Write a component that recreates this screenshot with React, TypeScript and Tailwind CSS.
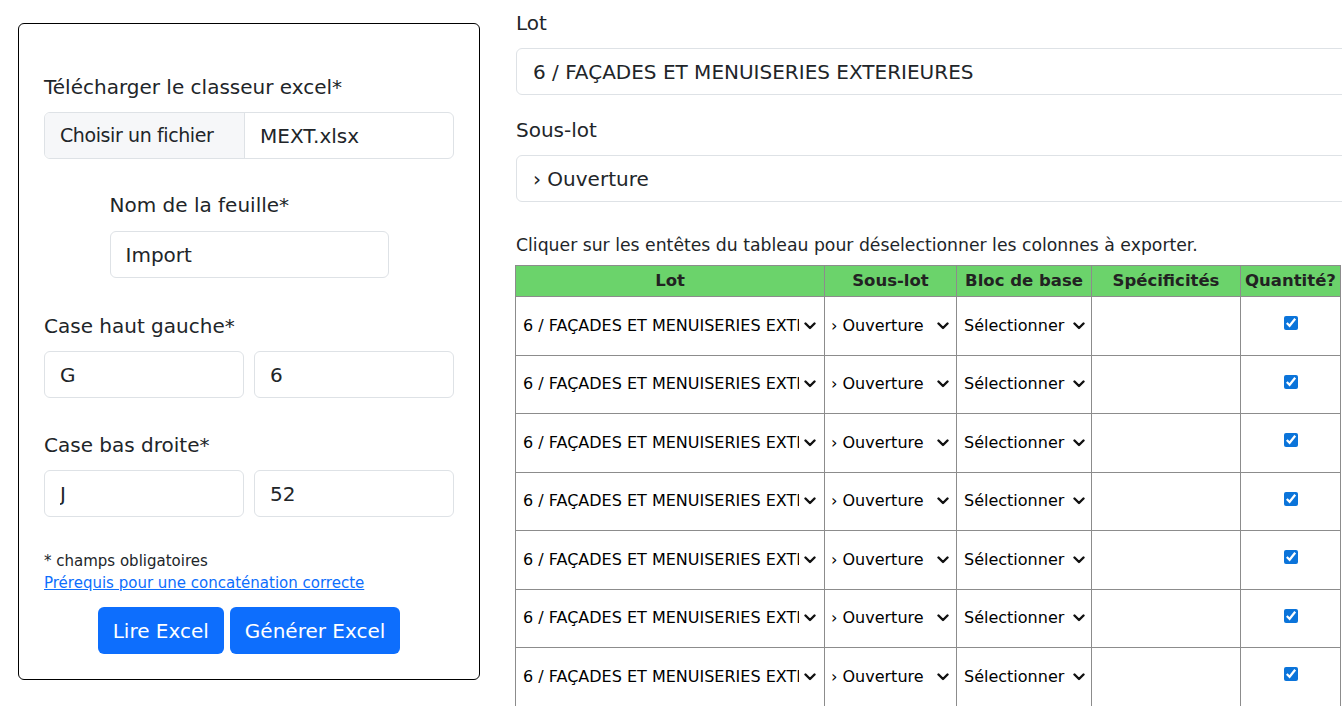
import React from 'react';

const rows = Array.from({ length: 7 }, (_, i) => i);

function Chevron() {
  return (
    <svg width="12" height="8" viewBox="0 0 12 8" className="pointer-events-none absolute right-[1px] top-1/2 -translate-y-1/2">
      <path d="M1.5 1.5 L6 6 L10.5 1.5" fill="none" stroke="#111" strokeWidth="2.4" strokeLinecap="round" strokeLinejoin="round" />
    </svg>
  );
}

function CellSelect({ value }: { value: string }) {
  return (
    <div className="relative w-full">
      <select
        defaultValue={value}
        className="w-full appearance-none bg-transparent pr-[18px] text-[16px] text-black outline-none"
      >
        <option>{value}</option>
      </select>
      <Chevron />
    </div>
  );
}

function TextInput({ value, className = '' }: { value: string; className?: string }) {
  return (
    <input
      readOnly
      value={value}
      className={`h-[47px] rounded-[6px] border border-[#dee2e6] bg-white px-[15px] text-[20px] text-[#212529] outline-none ${className}`}
    />
  );
}

export default function App() {
  return (
    <div
      className="flex h-[706px] w-[1342px] overflow-hidden bg-white text-[#212529]"
      style={{ fontFamily: '"DejaVu Sans", "Open Sans", sans-serif' }}
    >
      {/* Left card: import form */}
      <div className="ml-[18px] mt-[23px] w-[462px] shrink-0 self-start">
        <div className="rounded-[6px] border border-black px-[25px] pb-[25px] pt-[48px]">
          <label className="mb-[10px] block text-[20px] leading-[30px]">Télécharger le classeur excel*</label>
          <div className="flex h-[47px] overflow-hidden rounded-[6px] border border-[#dee2e6] text-[20px]">
            <div className="flex w-[200px] shrink-0 items-center whitespace-nowrap border-r border-[#dee2e6] bg-[#f6f7f9] pl-[15px] text-[19px] tracking-[-0.4px]">
              Choisir un fichier
            </div>
            <div className="flex items-center px-[15px]">MEXT.xlsx</div>
          </div>

          <div className="mx-auto mt-[31px] w-[279px]">
            <label className="mb-[11px] block text-[20px] leading-[30px]">Nom de la feuille*</label>
            <TextInput value="Import" className="w-full" />
          </div>

          <label className="mb-[10px] mt-[33px] block text-[20px] leading-[30px]">Case haut gauche*</label>
          <div className="flex gap-[10px]">
            <TextInput value="G" className="w-[200px]" />
            <TextInput value="6" className="w-[200px]" />
          </div>

          <label className="mb-[10px] mt-[32px] block text-[20px] leading-[30px]">Case bas droite*</label>
          <div className="flex gap-[10px]">
            <TextInput value="J" className="w-[200px]" />
            <TextInput value="52" className="w-[200px]" />
          </div>

          <p className="mt-[33px] text-[15px] leading-[22px]">* champs obligatoires</p>
          <a href="#" className="block text-[15px] leading-[22px] text-[#0d6efd] underline">
            Prérequis pour une concaténation correcte
          </a>

          <div className="mt-[13px] flex justify-center gap-[6px]">
            <button className="h-[47px] rounded-[6px] bg-[#0d6efd] px-[15px] text-[20px] text-white">Lire Excel</button>
            <button className="h-[47px] rounded-[6px] bg-[#0d6efd] px-[15px] text-[20px] text-white">Générer Excel</button>
          </div>
        </div>
      </div>

      {/* Right column: lot selection and table */}
      <div className="ml-[36px] w-[900px] shrink-0 pt-[8px]">
        <label className="mb-[10px] block text-[20px] leading-[30px]">Lot</label>
        <div className="flex h-[47px] items-center rounded-[6px] border border-[#dee2e6] px-[16px] text-[20px]">
          6 / FAÇADES ET MENUISERIES EXTERIEURES
        </div>

        <label className="mb-[10px] mt-[20px] block text-[20px] leading-[30px]">Sous-lot</label>
        <div className="flex h-[47px] items-center rounded-[6px] border border-[#dee2e6] px-[16px] text-[20px]">
          › Ouverture
        </div>

        <p className="mt-[31px] text-[17.25px] leading-[24px]">
          Cliquer sur les entêtes du tableau pour déselectionner les colonnes à exporter.
        </p>

        <table className="-ml-px mt-[8px] w-[826px] table-fixed border-collapse border border-[#8c8c8c]">
          <colgroup>
            <col className="w-[309px]" />
            <col className="w-[132px]" />
            <col className="w-[135px]" />
            <col className="w-[149px]" />
            <col className="w-[100px]" />
          </colgroup>
          <thead>
            <tr className="h-[31px] bg-[#6bd36b]">
              <th className="border border-[#8c8c8c] text-[16.5px] font-bold text-[#222]">Lot</th>
              <th className="border border-[#8c8c8c] text-[16.5px] font-bold text-[#222]">Sous-lot</th>
              <th className="border border-[#8c8c8c] text-[16.5px] font-bold text-[#222]">Bloc de base</th>
              <th className="border border-[#8c8c8c] text-[16.5px] font-bold text-[#222]">Spécificités</th>
              <th className="whitespace-nowrap border border-[#8c8c8c] text-[16.5px] font-bold text-[#222]">Quantité?</th>
            </tr>
          </thead>
          <tbody>
            {rows.map(i => (
              <tr key={i} className="h-[58.5px]">
                <td className="border border-[#8c8c8c] px-[7px]">
                  <CellSelect value="6 / FAÇADES ET MENUISERIES EXTERIEURES" />
                </td>
                <td className="border border-[#8c8c8c] px-[6px]">
                  <CellSelect value="› Ouverture" />
                </td>
                <td className="border border-[#8c8c8c] pl-[7px] pr-[5px]">
                  <CellSelect value="Sélectionner" />
                </td>
                <td className="border border-[#8c8c8c]"></td>
                <td className="border border-[#8c8c8c] text-center">
                  <input
                    type="checkbox"
                    defaultChecked
                    className="h-[14px] w-[14px] -translate-y-[3px] align-middle accent-[#0b74da]"
                  />
                </td>
              </tr>
            ))}
          </tbody>
        </table>
      </div>
    </div>
  );
}
